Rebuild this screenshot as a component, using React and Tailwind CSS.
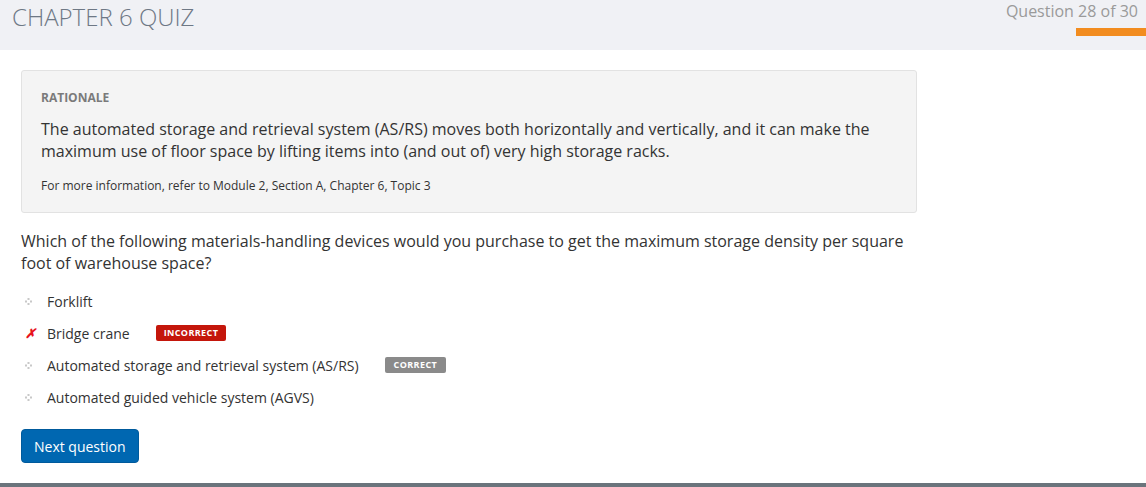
import { useState } from 'react'

function Bullet() {
  return (
    <svg width="7" height="7" viewBox="0 0 7 7" className="block">
      <rect x="2.5" y="0" width="2" height="2" fill="#c8c8c8" />
      <rect x="0" y="2.5" width="2" height="2" fill="#c8c8c8" />
      <rect x="5" y="2.5" width="2" height="2" fill="#c8c8c8" />
      <rect x="2.5" y="5" width="2" height="2" fill="#c8c8c8" />
    </svg>
  )
}

const options = [
  { label: 'Forklift' },
  { label: 'Bridge crane', wrong: true },
  { label: 'Automated storage and retrieval system (AS/RS)', correct: true },
  { label: 'Automated guided vehicle system (AGVS)' },
]

export default function App() {
  const [current] = useState(28)
  const total = 30

  return (
    <div className="w-[1146px] h-[487px] bg-white flex flex-col font-['Open_Sans',sans-serif] overflow-hidden">
      <div className="h-[50px] bg-[#f0f1f5] flex justify-between shrink-0">
        <h1 className="pl-[12px] pt-[1px] text-[24px] leading-[32px] font-light text-[#6e7885]">CHAPTER 6 QUIZ</h1>
        <div className="flex flex-col items-end">
          <span className="pr-[8px] text-[16px] leading-[22px] text-[#9a9a9a]">Question {current} of {total}</span>
          <div className="mt-[6px] h-[8px] w-[70px] bg-[#f28c1f]" />
        </div>
      </div>

      <div className="flex-1 px-[21px] pt-[20px]">
        <div className="w-[896px] bg-[#f4f4f4] border border-[#e2e2e2] rounded-[3px] px-[19px] pt-[18px] pb-[18px]">
          <p className="text-[12px] leading-[18px] font-bold text-[#7a7a7a] uppercase">Rationale</p>
          <p className="mt-[11px] text-[16px] leading-[22px] text-[#333]">
            The automated storage and retrieval system (AS/RS) moves both horizontally and vertically, and it can make the maximum use of floor space by lifting items into (and out of) very high storage racks.
          </p>
          <p className="mt-[15px] text-[12px] leading-[17px] text-[#333]">
            For more information, refer to Module 2, Section A, Chapter 6, Topic 3
          </p>
        </div>

        <p className="mt-[17px] w-[896px] text-[16px] leading-[22px] text-[#333]">
          Which of the following materials-handling devices would you purchase to get the maximum storage density per square foot of warehouse space?
        </p>

        <ul className="mt-[11px] flex flex-col">
          {options.map(o => (
            <li key={o.label} className="h-[32px] flex items-center">
              <span className="w-[26px] flex items-center pl-[4px]">
                {o.wrong ? (
                  <span className="text-[#e8141c] text-[13px] font-bold italic leading-none">✗</span>
                ) : (
                  <Bullet />
                )}
              </span>
              <span className="text-[14px] text-[#333]">{o.label}</span>
              {o.wrong && (
                <span className="ml-[26px] h-[16px] px-[8px] flex items-center rounded-[2px] bg-[#c4160b] text-[9px] font-bold tracking-[0.4px] text-white">INCORRECT</span>
              )}
              {o.correct && (
                <span className="ml-[26px] h-[16px] px-[9px] flex items-center rounded-[2px] bg-[#8a8a8a] text-[9px] font-bold tracking-[0.4px] text-white">CORRECT</span>
              )}
            </li>
          ))}
        </ul>

        <button className="mt-[16px] h-[34px] px-[12px] rounded-[4px] bg-[#0067b1] border border-[#005a9c] text-white text-[14px] font-medium">
          Next question
        </button>
      </div>

      <div className="h-[4px] bg-[#6b747c] shrink-0" />
    </div>
  )
}
